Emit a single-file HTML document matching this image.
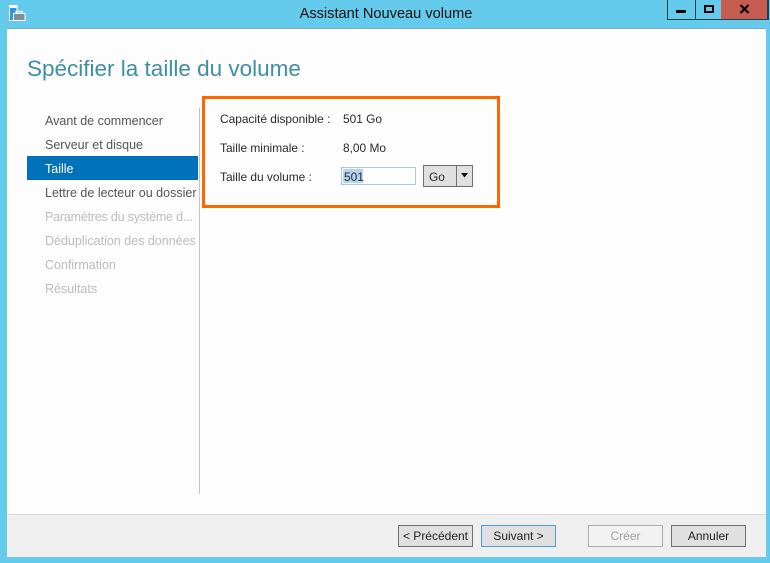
<!DOCTYPE html>
<html><head><meta charset="utf-8"><style>
html,body{margin:0;padding:0}
body{width:770px;height:563px;overflow:hidden;position:relative;background:#65cbec;font-family:"Liberation Sans",sans-serif;font-size:12px;color:#333}
.a{position:absolute;white-space:nowrap}
.t{position:absolute;white-space:nowrap;line-height:16px}
.side{left:45px;color:#555;font-size:12.5px}
.dis{color:#bcbcbc}
.btn{position:absolute;top:525px;width:73px;height:20px;border:1px solid #707070;background:#e0e0e0;text-align:center;line-height:21px;font-size:12px;color:#222;box-sizing:content-box}
.k{color:#2a2a2a;font-size:11.9px}
</style></head><body>
<svg class="a" style="left:8px;top:4px" width="18" height="18" viewBox="0 0 18 18">
<rect x="1.500" y="1.500" width="7.500" height="15" fill="#2f97df" stroke="#fff" stroke-width="1"/>
<rect x="2" y="2" width="6.500" height="2" fill="#fff"/>
<rect x="5" y="9" width="12.500" height="8" fill="#fff"/>
<rect x="6" y="10" width="10.500" height="6" fill="#7f8c99"/>
<path d="M8 9.500V7.500h6v2" fill="none" stroke="#fff" stroke-width="1.200"/>
</svg>
<div class="t" style="left:0;width:772px;text-align:center;top:6px;font-size:14.6px;color:#111">Assistant Nouveau volume</div>
<div class="a" style="left:667px;top:0;width:100px;height:19px;border:1px solid #1f4250;border-top:0;box-sizing:content-box"></div>
<div class="a" style="left:695px;top:0;width:1px;height:19px;background:#1f4250"></div>
<div class="a" style="left:721px;top:0;width:47px;height:20px;background:#c75c50;border-bottom:1px solid #1f4250;border-right:1px solid #1f4250;box-sizing:border-box"></div>
<div class="a" style="left:676px;top:10px;width:10px;height:3px;background:#000"></div>
<div class="a" style="left:704px;top:5px;width:10px;height:8px;border:2px solid #000;box-sizing:border-box"></div>
<svg class="a" style="left:739px;top:4px" width="11" height="10" viewBox="0 0 11 10"><path d="M1.500 1l8 8M9.500 1l-8 8" stroke="#000" stroke-width="2.200" fill="none"/></svg>
<div class="a" style="left:7px;top:28px;width:759px;height:1px;background:#8aa9b8"></div>
<div class="a" style="left:7px;top:29px;width:759px;height:485px;background:#fdfdfd"></div>
<div class="a" style="left:7px;top:514px;width:759px;height:1px;background:#d9d9d9"></div>
<div class="a" style="left:7px;top:515px;width:759px;height:42px;background:#efefef"></div>
<div class="t" style="left:27px;top:55px;line-height:28px;font-size:22.5px;color:#3f8fa3">Spécifier la taille du volume</div>
<div class="a" style="left:199px;top:108px;width:1px;height:386px;background:#c4c4c4"></div>
<div class="a" style="left:27px;top:156px;width:171px;height:24px;background:#0072bc"></div>
<div class="t side" style="top:113px">Avant de commencer</div>
<div class="t side" style="top:137px">Serveur et disque</div>
<div class="t side" style="top:161px;color:#fff">Taille</div>
<div class="t side" style="top:185px">Lettre de lecteur ou dossier</div>
<div class="t side dis" style="top:209px;letter-spacing:-.2px">Paramètres du système d...</div>
<div class="t side dis" style="top:233px">Déduplication des données</div>
<div class="t side dis" style="top:257px">Confirmation</div>
<div class="t side dis" style="top:281px">Résultats</div>
<div class="a" style="left:202px;top:96px;width:298px;height:112px;border:3px solid #ff6600;box-sizing:border-box"></div>
<div class="t k" style="left:220px;top:111px">Capacité disponible :</div>
<div class="t k" style="left:343px;top:111px">501 Go</div>
<div class="t k" style="left:220px;top:140px">Taille minimale :</div>
<div class="t k" style="left:343px;top:140px">8,00 Mo</div>
<div class="t k" style="left:220px;top:169px">Taille du volume :</div>
<div class="a" style="left:341px;top:167px;width:75px;height:18px;border:1px solid #a9c9e6;box-sizing:border-box;background:#fff"></div>
<div class="a" style="left:343px;top:169px;width:20px;height:14px;background:#b3d4f3"></div>
<div class="t k" style="left:344px;top:169px">501</div>
<div class="a" style="left:423px;top:165px;width:50px;height:22px;border:1px solid #707070;background:#e0e0e0;box-sizing:border-box"></div>
<div class="a" style="left:456px;top:165px;width:1px;height:22px;background:#707070"></div>
<div class="t k" style="left:429px;top:169px">Go</div>
<svg class="a" style="left:461px;top:173px" width="8" height="5"><path d="M0 0h7L3.500 4.500z" fill="#111"/></svg>
<div class="btn" style="left:398px">&lt; Précédent</div>
<div class="btn" style="left:481px;border-color:#4a9cea">Suivant &gt;</div>
<div class="btn" style="left:588px;border-color:#adadad;background:#f2f2f2;color:#a0a0a0">Créer</div>
<div class="btn" style="left:671px">Annuler</div>
</body></html>
